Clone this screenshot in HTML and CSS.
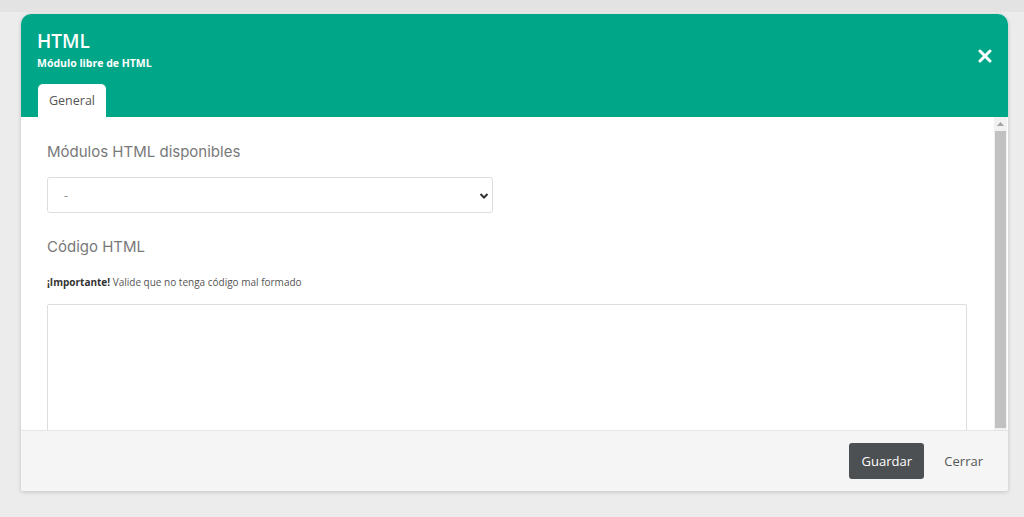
FILE: index.html
```html
<!DOCTYPE html>
<html lang="es">
<head>
    <meta charset="UTF-8">
    <meta name="viewport" content="width=device-width, initial-scale=1.0">
    <title>HTML</title>
    <link rel="stylesheet" href="styles.css">
</head>
<body>
    <div class="backdrop-top"></div>
    <div class="modal">
        <div class="modal-header">
            <div class="title-row">
                <div>
                    <h2>HTML</h2>
                    <p class="subtitle">Módulo libre de HTML</p>
                </div>
                <button class="close-button" aria-label="Cerrar">
                    <svg width="14" height="14" viewBox="0 0 14 14">
                        <path d="M2 2 L12 12 M12 2 L2 12" stroke="#ffffff" stroke-width="3" stroke-linecap="round"/>
                    </svg>
                </button>
            </div>
            <div class="tabs">
                <div class="tab active">General</div>
            </div>
        </div>

        <div class="modal-body">
            <div class="content">
                <div class="form-group">
                    <label for="modules">Módulos HTML disponibles</label>
                    <div class="select-wrap">
                        <select id="modules">
                            <option value="">-</option>
                        </select>
                        <svg class="chevron" width="10" height="8" viewBox="0 0 10 8">
                            <path d="M1.5 2 L5 5.5 L8.5 2" stroke="#333" stroke-width="2" fill="none"/>
                        </svg>
                    </div>
                </div>

                <div class="form-group">
                    <label for="code">Código HTML</label>
                    <p class="hint"><strong>¡Importante!</strong> Valide que no tenga código mal formado</p>
                    <textarea id="code"></textarea>
                </div>
            </div>
            <div class="scrollbar">
                <div class="scroll-arrow">
                    <svg width="7" height="4" viewBox="0 0 7 4"><path d="M0 4 L3.5 0 L7 4 Z" fill="#a3a3a3"/></svg>
                </div>
                <div class="scroll-thumb"></div>
            </div>
        </div>

        <div class="modal-footer">
            <button class="save-button">Guardar</button>
            <button class="close-link">Cerrar</button>
        </div>
    </div>
</body>
</html>
```

FILE: styles.css
```css
body {
    font-family: "Open Sans", Arial, sans-serif;
    margin: 0;
    padding: 0;
    background-color: #ececec;
    height: 517px;
    overflow: hidden;
}

.backdrop-top {
    height: 12px;
    background-color: #e3e3e3;
}

.modal {
    width: 987px;
    margin: 2px 0 0 21px;
    border-radius: 10px 10px 3px 3px;
    box-shadow: 0 1px 4px rgba(0, 0, 0, 0.18);
    overflow: hidden;
    background-color: #ffffff;
}

.modal-header {
    background-color: #00a688;
    padding: 16px 16px 0 16px;
    color: #ffffff;
}

.title-row {
    display: flex;
    justify-content: space-between;
    align-items: flex-start;
}

.modal-header h2 {
    font-size: 19px;
    font-weight: 600;
    margin: 0;
    line-height: 22px;
}

.subtitle {
    font-size: 10.5px;
    font-weight: 700;
    margin: 4px 0 0 0;
    line-height: 14px;
}

.close-button {
    background: none;
    border: none;
    padding: 0;
    margin: 19px 0 0 0;
    cursor: pointer;
    line-height: 0;
}

.tabs {
    display: flex;
    margin-top: 14px;
    padding-left: 1px;
}

.tab {
    background-color: #ffffff;
    color: #555555;
    font-size: 12.5px;
    padding: 0 11px;
    height: 33px;
    line-height: 34px;
    border-radius: 5px 5px 0 0;
}

.modal-body {
    display: flex;
    height: 313px;
    overflow: hidden;
}

.content {
    flex: 1;
    padding: 24px 26px 0 26px;
}

.form-group {
    margin-bottom: 23px;
}

.form-group label {
    display: block;
    font-family: Inter, "Open Sans", sans-serif;
    font-size: 15px;
    color: #797979;
    margin-bottom: 14px;
    line-height: 22px;
}

.select-wrap {
    position: relative;
    width: 446px;
}

.select-wrap select {
    width: 100%;
    height: 36px;
    border: 1px solid #dddddd;
    border-radius: 3px;
    background-color: #ffffff;
    padding: 0 16px;
    font-size: 12px;
    color: #888888;
    appearance: none;
    font-family: "Open Sans", sans-serif;
}

.chevron {
    position: absolute;
    right: 4px;
    top: 15px;
}

.hint {
    font-size: 10px;
    color: #555555;
    margin: 17px 0 15px 0;
    line-height: 14px;
}

.hint strong {
    color: #333333;
}

.form-group textarea {
    display: block;
    width: 920px;
    height: 160px;
    border: 1px solid #dddddd;
    border-radius: 2px;
    box-sizing: border-box;
    resize: none;
}

.scrollbar {
    width: 13px;
    margin-right: 1px;
    display: flex;
    flex-direction: column;
    background-color: #f1f1f1;
}

.scroll-arrow {
    height: 14px;
    display: flex;
    align-items: center;
    justify-content: center;
}

.scroll-thumb {
    flex: 1;
    background-color: #c1c1c1;
    margin: 0 1px 2px 1px;
}

.modal-footer {
    display: flex;
    justify-content: flex-end;
    align-items: center;
    gap: 6px;
    height: 60px;
    padding-right: 16px;
    background-color: #f5f5f5;
    border-top: 1px solid #e6e6e6;
}

.save-button {
    width: 75px;
    height: 36px;
    background-color: #4d5052;
    color: #ffffff;
    border: none;
    border-radius: 3px;
    font-size: 13px;
    font-family: "Open Sans", sans-serif;
    cursor: pointer;
}

.close-link {
    background: none;
    border: none;
    color: #555555;
    font-size: 13px;
    font-family: "Open Sans", sans-serif;
    padding: 0 9px 0 14px;
    cursor: pointer;
}
```
